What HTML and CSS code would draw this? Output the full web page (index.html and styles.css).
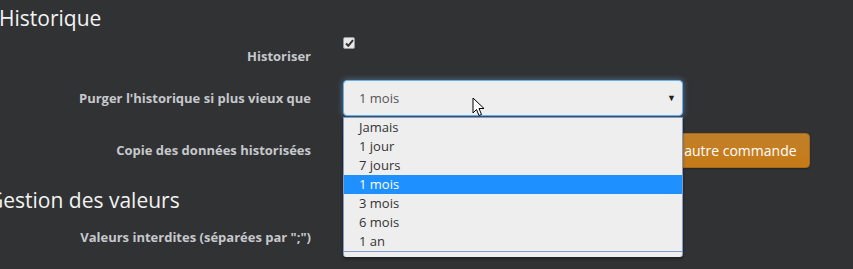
FILE: index.html
```html
<!DOCTYPE html>
<html lang="fr">
<head>
    <meta charset="UTF-8">
    <title>Configuration commande</title>
    <link rel="stylesheet" href="styles.css">
</head>
<body>
    <div class="panel">
        <legend class="section-title">Historique</legend>

        <div class="form-row row-check">
            <label class="row-label">Historiser</label>
            <div class="row-control">
                <span class="checkbox">
                    <svg width="9" height="8" viewBox="0 0 9 8"><path d="M1 4.5 L3.3 6.8 L8 1.2" fill="none" stroke="#333" stroke-width="2"/></svg>
                </span>
            </div>
        </div>

        <div class="form-row row-select">
            <label class="row-label">Purger l'historique si plus vieux que</label>
            <div class="row-control">
                <div class="select-box">
                    <span>1 mois</span>
                    <span class="arrow">&#9660;</span>
                </div>
                <ul class="dropdown">
                    <li>Jamais</li>
                    <li>1 jour</li>
                    <li>7 jours</li>
                    <li class="active">1 mois</li>
                    <li>3 mois</li>
                    <li>6 mois</li>
                    <li>1 an</li>
                </ul>
                <svg class="cursor" width="14" height="20" viewBox="0 0 14 20"><path d="M1 1 L1 16 L4.5 12.5 L7 18.5 L9.5 17.5 L7 11.5 L12 11.5 Z" fill="#fff" stroke="#000" stroke-width="1"/></svg>
            </div>
        </div>

        <div class="form-row row-button">
            <label class="row-label">Copie des données historisées</label>
            <div class="row-control">
                <button class="btn-warning">Copier l'historique de cette commande sur une autre commande</button>
            </div>
        </div>

        <legend class="section-title second">Gestion des valeurs</legend>

        <div class="form-row row-last">
            <label class="row-label">Valeurs interdites (séparées par ";")</label>
            <div class="row-control"></div>
        </div>
    </div>
</body>
</html>
```

FILE: styles.css
```css
* {
    margin: 0;
    padding: 0;
    box-sizing: border-box;
    font-family: 'Open Sans', 'Noto Sans', sans-serif;
}

body {
    background: #313234;
    width: 853px;
    height: 269px;
    overflow: hidden;
}

.panel {
    display: flex;
    flex-direction: column;
    margin-left: -2px;
}

.section-title {
    display: block;
    color: #f2f2f2;
    font-size: 21px;
    line-height: 30px;
    padding-top: 3px;
    height: 36px;
    margin-left: 1px;
}

.section-title.second {
    height: 32px;
    padding-top: 0;
    margin-left: -10px;
}

.form-row {
    display: grid;
    grid-template-columns: 313px 340px;
    column-gap: 32px;
}

.row-label {
    text-align: right;
    font-size: 13px;
    font-weight: bold;
    color: #c6c8cc;
    line-height: 20px;
}

.row-control {
    position: relative;
}

.row-check {
    height: 44px;
}

.row-check .row-label {
    padding-top: 10px;
}

.checkbox {
    display: flex;
    align-items: center;
    justify-content: center;
    width: 12px;
    height: 12px;
    margin-top: 1px;
    background: #e8e8e8;
    border: 1px solid #999;
    border-radius: 2px;
}

.row-select {
    height: 53px;
}

.row-select .row-label {
    padding-top: 8px;
}

.select-box {
    display: flex;
    justify-content: space-between;
    align-items: center;
    height: 36px;
    padding: 0 6px 0 15px;
    background: #eeeeee;
    border: 1px solid #66afe9;
    border-radius: 4px;
    box-shadow: 0 0 6px rgba(102, 175, 233, 0.55);
    color: #555;
    font-size: 13px;
}

.arrow {
    font-size: 9px;
    color: #222;
    padding-bottom: 2px;
}

.dropdown {
    position: absolute;
    top: 37px;
    left: 0;
    width: 340px;
    z-index: 5;
    list-style: none;
    background: #eeeeee;
    border: 1px solid #7f9ccb;
    border-bottom: none;
    border-radius: 0 0 3px 3px;
    box-shadow: 0 2px 3px rgba(0, 0, 0, 0.35);
    padding-bottom: 6px;
}

.dropdown::after {
    content: '';
    position: absolute;
    left: -1px;
    right: -1px;
    bottom: 5px;
    border-bottom: 1px solid #7f9ccb;
}

.dropdown li {
    height: 19px;
    line-height: 19px;
    padding-left: 15px;
    font-size: 13px;
    color: #333;
}

.dropdown li.active {
    background: #1e90ff;
    color: #fff;
}

.cursor {
    position: absolute;
    top: 17px;
    left: 129px;
    z-index: 6;
}

.row-button {
    height: 52px;
}

.row-button .row-label {
    padding-top: 7px;
}

.btn-warning {
    height: 35px;
    padding: 0 12px 0 30px;
    white-space: nowrap;
    font-size: 14px;
    color: #fff;
    background: linear-gradient(#c2802b, #c67a16);
    border: 1px solid #a76a1b;
    border-radius: 4px;
    box-shadow: 0 1px 2px rgba(0, 0, 0, 0.3);
}

.row-last .row-label {
    padding-top: 10px;
}
```
